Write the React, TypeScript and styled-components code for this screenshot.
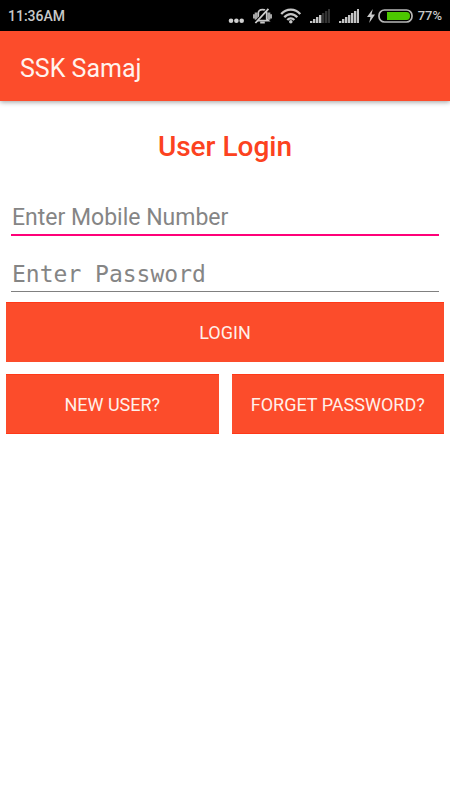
import React from "react";
import styled, { createGlobalStyle } from "styled-components";

const GlobalStyle = createGlobalStyle`
  *, *::before, *::after { box-sizing: border-box; }
  body {
    margin: 0;
    background: #fff;
    font-family: Roboto, sans-serif;
  }
`;

const StatusBar = styled.div`
  display: flex;
  align-items: center;
  justify-content: space-between;
  height: 31px;
  padding: 0 8px;
  background: #000;
  color: #c8c8c8;
  font-size: 14px;
  font-weight: 500;
  line-height: 32px;
`;

const StatusIcons = styled.div`
  display: flex;
  align-items: center;
  gap: 8px;

  svg { display: block; flex: none; }
`;

const Power = styled.div`
  display: flex;
  align-items: center;
  gap: 3px;
`;

const Percent = styled.span`
  margin-left: 2px;
  font-size: 13px;
`;

const AppBar = styled.header`
  display: flex;
  align-items: center;
  height: 70px;
  padding: 5px 20px 0;
  background: #fc4c2b;
  box-shadow: 0 1px 5px rgba(0, 0, 0, 0.4);
  color: #fff3ee;
`;

const AppTitle = styled.span`
  font-size: 25px;
  line-height: 32px;
`;

const Content = styled.main`
  padding: 29px 6px;
`;

const Heading = styled.h1`
  margin: 0 0 31px;
  color: #fc4220;
  font-size: 28px;
  font-weight: 500;
  line-height: 34px;
  text-align: center;
`;

const Form = styled.form`
  display: flex;
  flex-direction: column;
`;

const Field = styled.input<{ $active?: boolean; $mono?: boolean }>`
  display: block;
  height: ${(p) => (p.$active ? 41 : 36)}px;
  margin: 0 5px ${(p) => (p.$active ? 20 : 10)}px;
  padding: ${(p) => (p.$active ? 6 : 0)}px 1px 0;
  border: 0;
  border-bottom: ${(p) => (p.$active ? "2px solid #ff0078" : "1px solid #808080")};
  border-radius: 0;
  outline: 0;
  background: transparent;
  color: #333;
  font-family: ${(p) => (p.$mono ? '"DejaVu Sans Mono", monospace' : "Roboto, sans-serif")};
  font-size: 23px;

  &::placeholder { color: #858585; opacity: 1; }
`;

const Button = styled.button<{ $primary?: boolean }>`
  flex: 1 1 0;
  min-width: 0;
  min-height: 60px;
  padding: ${(p) => (p.$primary ? 0 : 2)}px 4px 0;
  border: 0 solid #ff3818;
  border-width: ${(p) => (p.$primary ? "1px 0 0" : "1px 0")};
  border-radius: 0;
  background: #fc4c2b;
  color: #fff0ea;
  font-family: inherit;
  font-size: 18px;
  line-height: 22px;
  cursor: pointer;
`;

const Actions = styled.div`
  display: flex;
  gap: 13px;
  margin-top: 12px;
`;

const MoreIcon = () => (
  <svg width="17" height="16" viewBox="0 0 17 16" fill="#d0d0d0" aria-hidden="true">
    <circle cx="4" cy="12.8" r="2.3" />
    <circle cx="9.4" cy="12.8" r="2.3" />
    <circle cx="14.7" cy="12.8" r="2.3" />
  </svg>
);

const MutedBellIcon = () => (
  <svg width="20" height="16" viewBox="0 0 20 16" fill="none" aria-hidden="true">
    <path d="M2.7 4.5h2.8v7.2H2.7V10.4H1V6.2h1.7zM18.3 4.5h-2.8v7.2h2.8v-1.3H20V6.2h-1.7z" fill="#a8a8a8" />
    <path d="M4.6 12.6 6.3 11V5.2C6.3 2.8 7.6 1.7 10.5 1.7s4.2 1.1 4.2 3.5V11l1.7 1.6H4.6M8.2 14.6h4.6" stroke="#c8c8c8" strokeWidth="1.7" />
    <path d="M4 12.8 14.4 1.4" stroke="#000" strokeWidth="1.4" />
    <path d="M3.4 15 16.4 .8" stroke="#d0d0d0" strokeWidth="1.8" />
  </svg>
);

const WifiIcon = () => (
  <svg width="21" height="16" viewBox="0 0 21 16" fill="none" stroke="#c6c6c6" strokeWidth="2.3" aria-hidden="true">
    <path d="M1.2 6.1C6.4.2 15.2.2 20.2 6.1M4.3 9.2c3.7-4.2 9.3-4.2 13 0M7.3 12.1c2-2.3 5-2.3 7 0" />
    <circle cx="10.8" cy="13.8" r="1.8" fill="#c6c6c6" stroke="none" />
  </svg>
);

const bars = [
  { x: 1, h: 2 },
  { x: 4, h: 4 },
  { x: 7, h: 6 },
  { x: 10, h: 8 },
  { x: 13, h: 10 },
  { x: 16, h: 12 },
  { x: 19, h: 14 },
];

const SignalIcon = ({ level }: { level: number }) => (
  <svg width="21" height="16" viewBox="0 0 21 16" aria-hidden="true">
    {bars.map((bar, i) => (
      <rect key={bar.x} x={bar.x} y={15 - bar.h} width="2.4" height={bar.h} fill={i < level ? "#c4c4c4" : "#333"} />
    ))}
  </svg>
);

const BoltIcon = () => (
  <svg width="8" height="16" viewBox="0 0 8 16" fill="#c8c8c8" aria-hidden="true">
    <path d="M5.8 1 0 9h3.5L2.2 15 8 6.4H4.5z" />
  </svg>
);

const BatteryIcon = () => (
  <svg width="35" height="16" viewBox="0 0 35 16" aria-hidden="true">
    <rect x="1" y="2" width="33" height="12" rx="5.5" fill="#000" stroke="#b8b8b8" strokeWidth="1.7" />
    <path d="M9 4h19.5q3.5 0 3.5 4t-3.5 4H9z" fill="#4cc700" />
  </svg>
);

export default function App() {
  return (
    <>
      <GlobalStyle />
      <StatusBar>
        <span>11:36AM</span>
        <StatusIcons>
          <MoreIcon />
          <MutedBellIcon />
          <WifiIcon />
          <SignalIcon level={4} />
          <SignalIcon level={7} />
          <Power>
            <BoltIcon />
            <BatteryIcon />
            <Percent>77%</Percent>
          </Power>
        </StatusIcons>
      </StatusBar>
      <AppBar>
        <AppTitle>SSK Samaj</AppTitle>
      </AppBar>
      <Content>
        <Heading>User Login</Heading>
        <Form onSubmit={(e) => e.preventDefault()}>
          <Field $active type="tel" aria-label="Enter Mobile Number" placeholder="Enter Mobile Number" />
          <Field $mono type="password" aria-label="Enter Password" placeholder="Enter Password" />
          <Button $primary type="submit">LOGIN</Button>
          <Actions>
            <Button type="button">NEW USER?</Button>
            <Button type="button">FORGET PASSWORD?</Button>
          </Actions>
        </Form>
      </Content>
    </>
  );
}
